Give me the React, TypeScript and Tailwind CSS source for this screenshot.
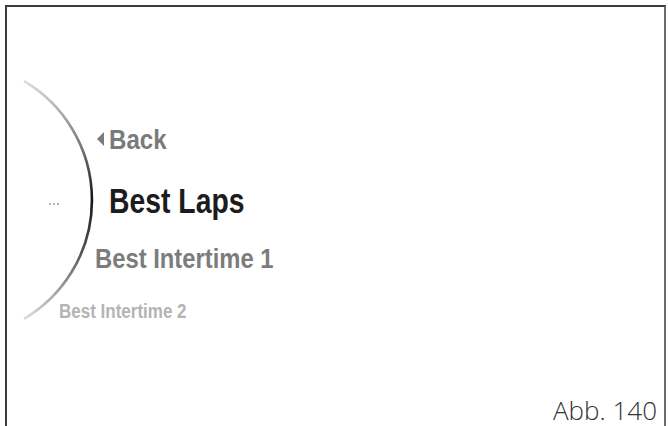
import React from "react";

const label = { fontFamily: '"Liberation Sans", Arial, sans-serif' };

function Dial() {
  return (
    <svg
      className="absolute left-0 top-0"
      width="120"
      height="330"
      viewBox="0 0 120 330"
      fill="none"
    >
      <defs>
        <linearGradient id="arcShade" x1="0" y1="72" x2="0" y2="314" gradientUnits="userSpaceOnUse">
          <stop offset="0" stopColor="#e0e0e0" />
          <stop offset="0.3" stopColor="#707070" />
          <stop offset="0.5" stopColor="#151515" />
          <stop offset="0.72" stopColor="#555555" />
          <stop offset="1" stopColor="#e0e0e0" />
        </linearGradient>
      </defs>
      <path
        d="M18 74.7 A138 138 0 0 1 18 311.3"
        stroke="url(#arcShade)"
        strokeWidth="2.6"
        strokeLinecap="round"
      />
      <circle cx="43" cy="197" r="1" fill="#9a9a9a" />
      <circle cx="47" cy="197" r="1" fill="#9a9a9a" />
      <circle cx="51" cy="197" r="1" fill="#9a9a9a" />
    </svg>
  );
}

export default function App() {
  return (
    <div className="h-[426px] w-[668px] bg-white pl-[5px] pt-[5px]">
      <div className="relative flex h-[421px] w-[661px] flex-col border-l-2 border-r-2 border-t-2 border-l-[#3c3c3c] border-r-[#6a6a6a] border-t-[#3c3c3c]">
        <Dial />

        <div className="relative flex flex-col whitespace-nowrap pt-[119px] font-bold leading-none" style={label}>
          <div className="ml-[90px] flex h-[28px] items-center gap-[5px] text-[28px] text-[#7a7a7a]">
            <svg width="7" height="14" viewBox="0 0 7 14" className="mb-[3px] shrink-0">
              <polygon points="7,0 7,14 0,7" fill="#7a7a7a" />
            </svg>
            <span className="origin-left scale-x-[0.86]">Back</span>
          </div>
          <div className="ml-[102px] mt-[29px] h-[35px] origin-left scale-x-[0.81] text-[35px] text-[#1c1c1c]">
            Best Laps
          </div>
          <div className="ml-[88px] mt-[27px] h-[28px] origin-left scale-x-[0.85] text-[28px] text-[#7c7c7c]">
            Best Intertime 1
          </div>
          <div className="ml-[52px] mt-[28px] h-[20px] origin-left scale-x-[0.85] text-[20px] text-[#b4b4b4]">
            Best Intertime 2
          </div>
        </div>

        <div
          className="mt-auto pb-[2px] pr-[7px] text-right text-[26px] font-light leading-[28px] text-[#333]"
          style={{ fontFamily: '"Open Sans", sans-serif' }}
        >
          Abb. 140
        </div>
      </div>
    </div>
  );
}
